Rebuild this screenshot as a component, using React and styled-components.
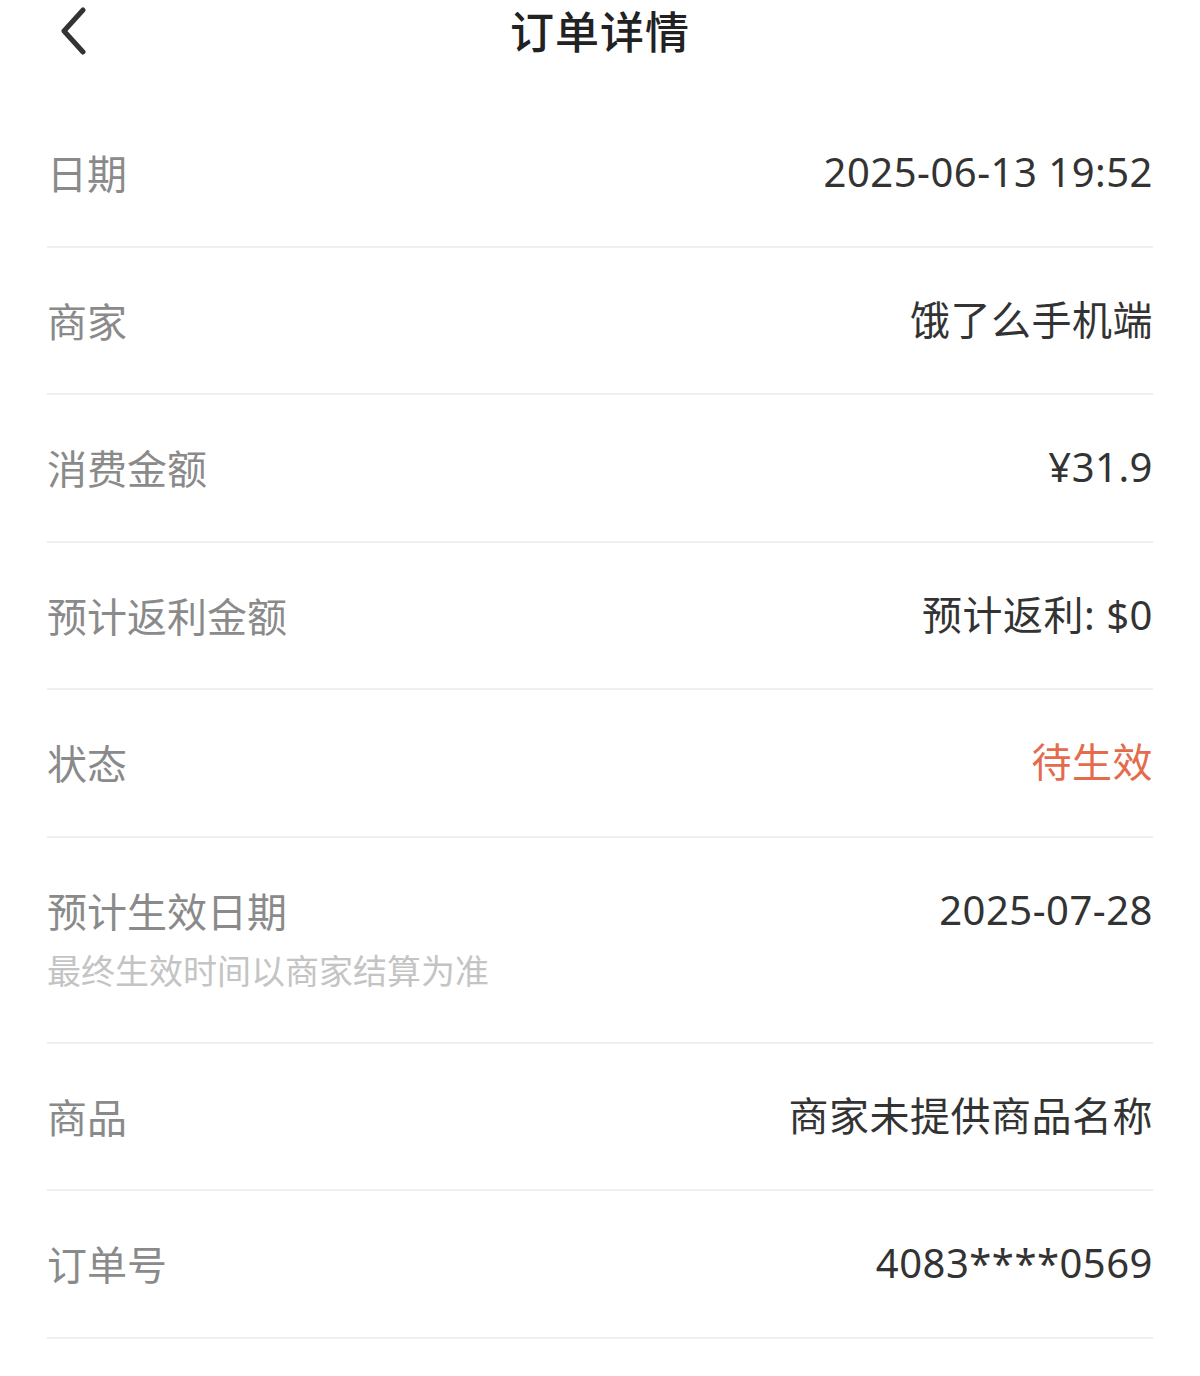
import React from 'react';
import styled, { createGlobalStyle } from 'styled-components';

const GlobalStyle = createGlobalStyle`
  html, body {
    margin: 0;
    padding: 0;
    background: #fff;
  }
  body {
    font-family: "Noto Sans", "Noto Sans CJK SC", sans-serif;
    -webkit-font-smoothing: antialiased;
  }
`

const Page = styled.div`
  width: 1200px;
  min-height: 1376px;
  background: #fff;
`

const Header = styled.header`
  position: relative;
  height: 60px;
  display: flex;
  justify-content: center;
  align-items: center;
  margin-bottom: 40px;
`

const BackBtn = styled.button`
  position: absolute;
  left: 56px;
  top: 4px;
  width: 40px;
  height: 52px;
  padding: 0;
  border: none;
  background: transparent;
  display: flex;
  align-items: center;
  justify-content: center;
  cursor: pointer;
`

const Title = styled.h1`
  margin: 0;
  font-size: 44px;
  line-height: 60px;
  font-weight: 500;
  color: #222;
  letter-spacing: 1px;
  font-family: "Noto Sans CJK SC", sans-serif;
`

const List = styled.div`
  padding: 0 47px;
`

const Row = styled.div`
  display: flex;
  justify-content: space-between;
  align-items: flex-start;
  padding: ${props => props.$tall ? '49px 0 51px' : '49px 0 50.5px'};
  border-bottom: 2px solid #efefef;
`

const LabelCol = styled.div`
  display: flex;
  flex-direction: column;
`

const Label = styled.span`
  font-size: 40px;
  line-height: 46px;
  color: #8a8a8a;
  font-family: "Noto Sans CJK SC", sans-serif;
`

const Hint = styled.span`
  margin-top: 16px;
  font-size: 34px;
  line-height: 42px;
  color: #c4c4c4;
  font-family: "Noto Sans CJK SC", sans-serif;
`

const Value = styled.span`
  font-size: 40px;
  line-height: 46px;
  letter-spacing: 0.5px;
  color: ${props => props.$accent ? '#e46c4c' : '#333'};
  font-family: "Noto Sans", "Noto Sans CJK SC", sans-serif;
  text-align: right;
`

const rows = [
  { label: '日期', value: '2025-06-13 19:52' },
  { label: '商家', value: '饿了么手机端' },
  { label: '消费金额', value: '¥31.9' },
  { label: '预计返利金额', value: '预计返利: $0' },
  { label: '状态', value: '待生效', accent: true },
  { label: '预计生效日期', value: '2025-07-28', hint: '最终生效时间以商家结算为准' },
  { label: '商品', value: '商家未提供商品名称' },
  { label: '订单号', value: '4083****0569' },
];

export default function App() {
  return (
    <Page>
      <GlobalStyle />
      <Header>
        <BackBtn aria-label="返回">
          <svg width="30" height="50" viewBox="0 0 30 50" fill="none">
            <path d="M22 5 L3 26 L22 47" stroke="#333" strokeWidth="5" strokeLinecap="round" strokeLinejoin="round" />
          </svg>
        </BackBtn>
        <Title>订单详情</Title>
      </Header>
      <List>
        {rows.map(r => (
          <Row key={r.label} $tall={!!r.hint}>
            <LabelCol>
              <Label>{r.label}</Label>
              {r.hint && <Hint>{r.hint}</Hint>}
            </LabelCol>
            <Value $accent={r.accent}>{r.value}</Value>
          </Row>
        ))}
      </List>
    </Page>
  );
}
